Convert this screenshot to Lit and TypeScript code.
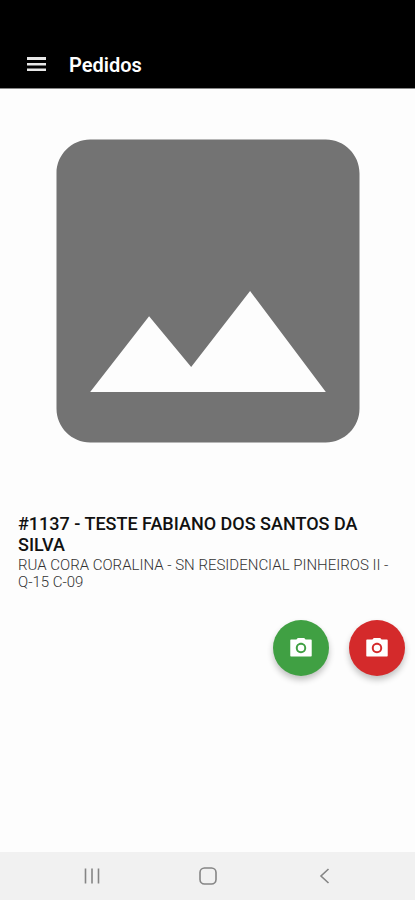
import { LitElement, html, css } from "lit";
import { customElement, property } from "lit/decorators.js";

@customElement("camera-button")
class CameraButton extends LitElement {
  @property() label = "";

  static styles = css`
    :host {
      display: block;
    }
    .fab {
      display: flex;
      align-items: center;
      justify-content: center;
      width: 56px;
      height: 56px;
      padding: 0;
      border: 0;
      border-radius: 50%;
      background: var(--fab-color);
      color: #fff;
      box-shadow: 0 4px 6px rgba(0, 0, 0, 0.24);
      cursor: pointer;
    }
    .icon {
      width: 26px;
      height: 26px;
      fill: currentColor;
    }
  `;

  render() {
    return html`
      <button class="fab" type="button" aria-label=${this.label}>
        <svg class="icon" viewBox="0 0 24 24" aria-hidden="true">
          <circle cx="12" cy="12" r="3" />
          <path
            d="M9 2.800L7.800 4.200H3c-.5 0-.9.4-.9.9v13.800c0 .5.4.9.9.9h18c.5 0 .9-.4.9-.9V5.100c0-.5-.4-.9-.9-.9h-4.800L15 2.800H9zm3 14c-2.650 0-4.800-2.150-4.800-4.800S9.350 7.200 12 7.200s4.800 2.150 4.800 4.800-2.150 4.800-4.800 4.800z"
          />
        </svg>
      </button>
    `;
  }
}

@customElement("app-root")
class AppRoot extends LitElement {
  static styles = css`
    :host {
      display: flex;
      flex-direction: column;
      min-height: 100vh;
      background: #fdfdfd;
      color: #111;
      font-family: Roboto, "Noto Sans", sans-serif;
    }
    .bar {
      display: flex;
      align-items: center;
      gap: 20px;
      padding: 41px 24px 0;
      height: 47px;
      background: #000;
      color: #fff;
      border-bottom: 1px solid #888;
    }
    .icon-button {
      display: flex;
      align-items: center;
      justify-content: center;
      padding: 0;
      border: 0;
      background: none;
      color: inherit;
      cursor: pointer;
    }
    .menu {
      width: 25px;
      height: 24px;
      fill: #e8e8e8;
    }
    .title {
      margin: 0;
      font-size: 20px;
      line-height: 24px;
      font-weight: 600;
    }
    .content {
      flex: 1;
    }
    .photo {
      display: block;
      margin: 0 5px 0 6px;
    }
    .placeholder {
      display: block;
      width: 100%;
      fill: #737373;
    }
    .order {
      padding: 20px 24px 0 18px;
    }
    .name {
      margin: 0;
      font-size: 18px;
      line-height: 21px;
      font-weight: 500;
    }
    .address {
      margin: 2px 0 0;
      font-size: 15px;
      line-height: 17px;
      font-weight: 300;
      color: #333;
    }
    .actions {
      display: flex;
      justify-content: flex-end;
      gap: 20px;
      padding: 29px 10px 20px;
    }
    .accept {
      --fab-color: #40a043;
    }
    .reject {
      --fab-color: #d42a2b;
    }
    .system {
      display: flex;
      height: 48px;
      padding: 0 34px;
      background: #f1f1f1;
      color: #858585;
    }
    .key {
      flex: 1;
    }
    .glyph {
      width: 20px;
      height: 20px;
      fill: none;
      stroke: currentColor;
      stroke-width: 1.6;
    }
  `;

  render() {
    return html`
      <header class="bar">
        <button class="icon-button" type="button" aria-label="Menu">
          <svg class="menu" viewBox="0 0 25 24" aria-hidden="true">
            <path d="M3 4h19v3H3zM3 10h19v2.500H3zM3 15.500h19V18H3z" />
          </svg>
        </button>
        <h1 class="title">Pedidos</h1>
      </header>
      <main class="content">
        <div class="photo">
          <svg class="placeholder" viewBox="0 0 24 24" role="img" aria-label="Sem imagem">
            <path
              d="M21 19V5c0-1.100-.9-2-2-2H5c-1.100 0-2 .9-2 2v14c0 1.100.9 2 2 2h14c1.100 0 2-.9 2-2zM8.500 13.500l2.500 3.010L14.500 12l4.500 6H5l3.500-4.500z"
            />
          </svg>
        </div>
        <section class="order">
          <h2 class="name">#1137 - TESTE FABIANO DOS SANTOS DA SILVA</h2>
          <p class="address">RUA CORA CORALINA - SN RESIDENCIAL PINHEIROS II - Q-15 C-09</p>
        </section>
        <div class="actions">
          <camera-button class="accept" label="Fotografar entrega"></camera-button>
          <camera-button class="reject" label="Fotografar recusa"></camera-button>
        </div>
      </main>
      <nav class="system" aria-label="Sistema">
        <button class="icon-button key" type="button" aria-label="Recentes">
          <svg class="glyph" viewBox="0 0 20 20" aria-hidden="true">
            <path d="M3.500 2.500v15M10 2.500v15M16.500 2.500v15" />
          </svg>
        </button>
        <button class="icon-button key" type="button" aria-label="Início">
          <svg class="glyph" viewBox="0 0 20 20" aria-hidden="true">
            <rect x="2" y="2" width="16" height="16" rx="4.500" />
          </svg>
        </button>
        <button class="icon-button key" type="button" aria-label="Voltar">
          <svg class="glyph" viewBox="0 0 20 20" aria-hidden="true">
            <path d="M15.500 3l-7.500 7 7.500 7" />
          </svg>
        </button>
      </nav>
    `;
  }
}
